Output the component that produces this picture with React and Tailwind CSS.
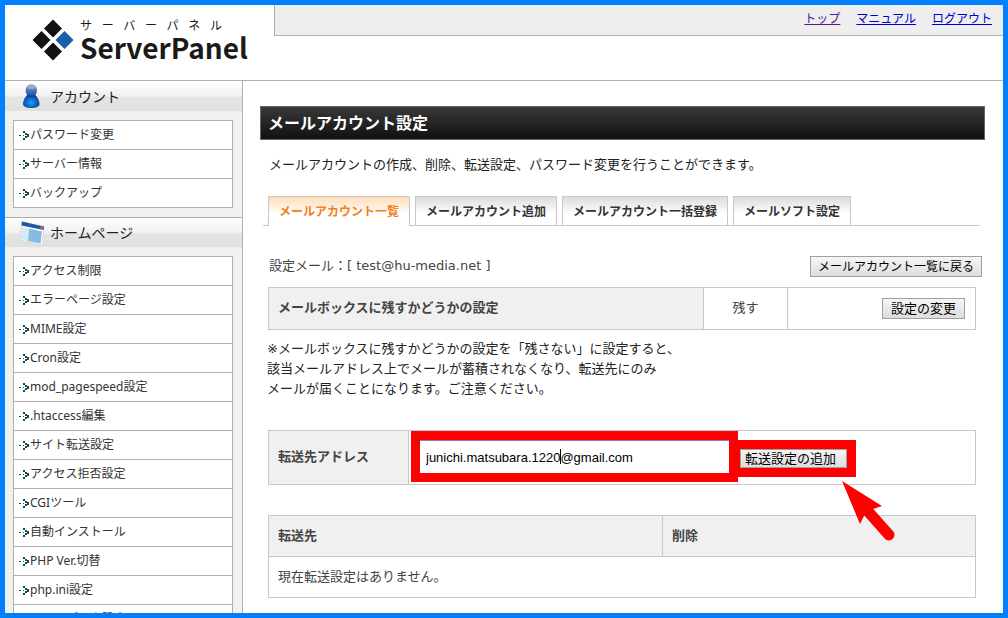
import { useState } from "react";

const accountMenu = ["パスワード変更", "サーバー情報", "バックアップ"];

const homepageMenu = [
  "アクセス制限",
  "エラーページ設定",
  "MIME設定",
  "Cron設定",
  "mod_pagespeed設定",
  ".htaccess編集",
  "サイト転送設定",
  "アクセス拒否設定",
  "CGIツール",
  "自動インストール",
  "PHP Ver.切替",
  "php.ini設定",
  "サイトデータ設定",
];

const tabs = [
  "メールアカウント一覧",
  "メールアカウント追加",
  "メールアカウント一括登録",
  "メールソフト設定",
];

function LogoMark() {
  return (
    <svg width="42" height="42" viewBox="0 0 42 42" aria-hidden="true">
      <path d="M21 0.500l9 9-9 9-9-9z" fill="#111" />
      <path d="M9.500 12l9 9-9 9-9-9z" fill="#111" />
      <path d="M32.500 12l9 9-9 9-9-9z" fill="#1c5fa8" />
      <path d="M21 23.500l9 9-9 9-9-9z" fill="#111" />
    </svg>
  );
}

function UserIcon() {
  return (
    <svg width="28" height="26" viewBox="0 0 28 26" aria-hidden="true">
      <defs>
        <linearGradient id="head" x1="0" y1="0" x2="0" y2="1">
          <stop offset="0" stopColor="#8aa0cc" />
          <stop offset="0.4" stopColor="#5a7fc0" />
          <stop offset="1" stopColor="#0d3f9c" />
        </linearGradient>
        <radialGradient id="body" cx="0.5" cy="0.6" r="0.6">
          <stop offset="0" stopColor="#1fa0f0" />
          <stop offset="0.6" stopColor="#0c62c0" />
          <stop offset="1" stopColor="#0a3480" />
        </radialGradient>
      </defs>
      <path
        d="M10.500 11.500c-2.500 3-4.500 6-4.500 9.500 0 2.500 3.500 4 8.300 4s8.200-1.500 8.200-4c0-3.500-2-6.500-4.500-9.500z"
        fill="url(#body)"
      />
      <ellipse cx="14.300" cy="7.500" rx="5.700" ry="6.300" fill="url(#head)" />
      <ellipse cx="14.300" cy="4" rx="4" ry="2" fill="#a9b5d4" opacity="0.7" />
    </svg>
  );
}

function WindowIcon() {
  return (
    <svg width="28" height="26" viewBox="0 0 28 26" aria-hidden="true">
      <path d="M5 2l22 5-2 18-22-5z" fill="#fff" stroke="#d3dce4" strokeWidth="1" />
      <path d="M4.500 7l7.500 1.500-1 12.500-7.500-2z" fill="#d5e9f6" />
      <path d="M12 8.500l13 3-1.500 12-12.500-2.500z" fill="#86bce2" />
      <path d="M5 1.500l22 5-0.500 3.500-22-4.500z" fill="#1d5ba5" />
      <path d="M23.500 6l3 0.700-0.400 2.500-3-0.600z" fill="#e0533a" />
    </svg>
  );
}

function BulletIcon() {
  return (
    <svg
      width="11"
      height="9"
      viewBox="0 0 11 9"
      fill="#174a50"
      shapeRendering="crispEdges"
      aria-hidden="true"
    >
      <path d="M0 4h2v1H0zM4 0h2v2H4zM6 2h2v2H6zM8 3h2v3H8zM6 5h2v2H6zM4 7h2v2H4zM4 4h1v1H4z" />
    </svg>
  );
}

function MenuSection({ title, icon, items, first }) {
  return (
    <section className="pb-[9px]">
      <h2
        className={
          "flex h-[30px] items-center gap-[5px] bg-[linear-gradient(#fff,#f0f0f0_50%,#e4e4e4_55%,#e0e0e0)] pl-[12px] text-[14px] text-[#222] " +
          (first ? "" : "border-t border-[#b0b0b0]")
        }
      >
        {icon}
        {title}
      </h2>
      <ul className="mt-[9px] mr-[9px] ml-2 border border-b-0 border-[#b0b0b0] bg-white">
        {items.map((item) => (
          <li key={item} className="h-[29px] border-b border-[#b0b0b0]">
            <a
              href="#"
              className="flex h-full items-center pl-[5px] text-[12px] text-[#333]"
            >
              <BulletIcon />
              {item}
            </a>
          </li>
        ))}
      </ul>
    </section>
  );
}

function GrayButton({ children, className = "" }) {
  return (
    <button
      type="button"
      className={
        "border border-[#a0a0a0] bg-linear-to-b from-[#f6f6f6] to-[#dddddd] whitespace-nowrap text-black " +
        className
      }
    >
      {children}
    </button>
  );
}

function Header() {
  return (
    <header className="flex h-[76px] items-start justify-between border-b border-[#b0b0b0]">
      <a href="#" className="flex items-center pt-[14px] pl-[27px] text-[#1a1a1a]">
        <LogoMark />
        <span className="ml-[6px] flex w-[165px] flex-col">
          <span className="w-[142px] text-[12px] leading-[14px] [text-align-last:justify]">
            サーバーパネル
          </span>
          <span className="text-[28px] leading-[28px] font-bold font-['Noto_Sans_CJK_JP',sans-serif]">
            ServerPanel
          </span>
        </span>
      </a>
      <nav className="ml-[29px] flex h-[31px] flex-1 items-center justify-end gap-4 border-b border-l border-[#b0b0b0] bg-[#eee] pr-[11px] pb-[3px] text-[12px]">
        <a href="#" className="text-[#551a8b] underline">
          トップ
        </a>
        <a href="#" className="text-[#0000cc] underline">
          マニュアル
        </a>
        <a href="#" className="text-[#0000cc] underline">
          ログアウト
        </a>
      </nav>
    </header>
  );
}

function Tabs() {
  return (
    <nav className="mr-[5px] ml-[3px] flex gap-[5px] border-b border-[#c8c8c8] pl-[5px]">
      {tabs.map((tab, i) => (
        <a
          key={tab}
          href="#"
          className={
            i === 0
              ? "-mb-px h-[30px] border border-b-0 border-[#c8c8c8] bg-linear-to-b from-[#ffdcb8] to-white to-60% px-[10px] text-[12px] leading-[30px] font-bold whitespace-nowrap text-[#f08020]"
              : "h-[29px] border border-b-0 border-[#c8c8c8] bg-linear-to-b from-[#dcdcdc] to-white to-60% px-[10px] text-[12px] leading-[30px] font-bold whitespace-nowrap text-[#333]"
          }
        >
          {tab}
        </a>
      ))}
    </nav>
  );
}

export default function App() {
  const [address, setAddress] = useState("junichi.matsubara.1220@gmail.com");

  return (
    <div className="flex h-screen flex-col overflow-hidden border-5 border-[#0080ff] bg-white font-['DejaVu_Sans','Noto_Sans_CJK_JP',sans-serif]">
      <Header />
      <div className="flex min-h-0 flex-1">
        <aside className="w-[238px] shrink-0 overflow-hidden border-r border-[#b0b0b0] bg-[#f1f1f1] font-['Noto_Sans','Noto_Sans_CJK_JP',sans-serif]">
          <MenuSection title="アカウント" icon={<UserIcon />} items={accountMenu} first />
          <MenuSection title="ホームページ" icon={<WindowIcon />} items={homepageMenu} />
        </aside>

        <main className="min-w-0 flex-1 pt-[25px] pr-[18px] pl-[17px] text-[13px] text-[#444]">
          <h1 className="h-[34px] border border-[#666] bg-linear-to-b from-[#3a3a3a] to-[#111] pl-[7px] text-[16px] leading-[34px] font-bold text-white">
            メールアカウント設定
          </h1>
          <p className="mt-[15px] mb-[21px] pl-[9px] leading-[20px] text-[#222]">
            メールアカウントの作成、削除、転送設定、パスワード変更を行うことができます。
          </p>

          <Tabs />

          <div className="mt-[30px] mr-[3px] ml-[9px] flex items-start justify-between">
            <p className="leading-[19px]">設定メール：[ test@hu-media.net ]</p>
            <GrayButton className="h-[21px] px-[7px] text-[12px] leading-[18px]">
              メールアカウント一覧に戻る
            </GrayButton>
          </div>

          <div className="mr-[9px] ml-[8px]">
            <table className="mt-[10px] w-full table-fixed border-collapse">
              <tbody>
                <tr className="h-[42px]">
                  <th
                    scope="row"
                    className="border border-[#c8c8c8] bg-[#f0f0f0] px-[9px] pb-[2px] text-left"
                  >
                    メールボックスに残すかどうかの設定
                  </th>
                  <td className="w-[84px] border border-[#c8c8c8] pb-[2px] text-center">残す</td>
                  <td className="w-[188px] border border-[#c8c8c8] pr-[10px] text-right">
                    <GrayButton className="h-[21px] px-[8px] text-[13px] leading-[18px]">
                      設定の変更
                    </GrayButton>
                  </td>
                </tr>
              </tbody>
            </table>

            <p className="mt-[9px] -ml-px leading-[20px] text-[#222]">
              ※メールボックスに残すかどうかの設定を「残さない」に設定すると、
              <br />
              該当メールアドレス上でメールが蓄積されなくなり、転送先にのみ
              <br />
              メールが届くことになります。ご注意ください。
            </p>

            <table className="mt-[31px] w-full table-fixed border-collapse">
              <tbody>
                <tr className="h-[54px]">
                  <th
                    scope="row"
                    className="w-[140px] border border-[#c8c8c8] bg-[#f0f0f0] px-[9px] pb-[2px] text-left"
                  >
                    <label htmlFor="address">転送先アドレス</label>
                  </th>
                  <td className="border border-[#c8c8c8] pb-[2px]">
                    <div className="flex items-end pl-[2px]">
                      <div className="relative w-[327px] border-9 border-[#ff0000]">
                        <input
                          id="address"
                          type="text"
                          value={address}
                          onChange={(e) => setAddress(e.target.value)}
                          className="block h-[33px] w-full border-t border-[#8080d0] bg-white pl-[6px] font-['Liberation_Sans',sans-serif] text-[13px] text-black outline-none"
                        />
                        <span className="absolute top-[9px] left-[140px] h-[15px] w-px bg-black" />
                      </div>
                      <div className="relative mb-[5px] -ml-[7px] w-[125px] border-9 border-[#ff0000]">
                        <GrayButton className="block h-[19px] w-full px-[4px] text-left text-[13px] leading-[16px]">
                          転送設定の追加
                        </GrayButton>
                        {/* pointer arrow */}
                        <svg
                          width="54"
                          height="62"
                          viewBox="0 0 54 62"
                          className="absolute top-[32px] left-[102px]"
                          aria-hidden="true"
                        >
                          <path d="M0 0L40 25 31 28 22 35 18 43z" fill="#f00" />
                          <path
                            d="M24 28L47 54"
                            stroke="#f00"
                            strokeWidth="11"
                            strokeLinecap="round"
                          />
                        </svg>
                      </div>
                    </div>
                  </td>
                </tr>
              </tbody>
            </table>

            <table className="mt-[30px] w-full table-fixed border-collapse">
              <thead>
                <tr className="h-[41px] bg-[#f0f0f0] text-left">
                  <th scope="col" className="w-[394px] border border-[#c8c8c8] px-[9px]">
                    転送先
                  </th>
                  <th scope="col" className="border border-[#c8c8c8] px-[9px]">
                    削除
                  </th>
                </tr>
              </thead>
              <tbody>
                <tr className="h-[41px]">
                  <td colSpan={2} className="border border-[#c8c8c8] px-[9px]">
                    現在転送設定はありません。
                  </td>
                </tr>
              </tbody>
            </table>
          </div>
        </main>
      </div>
    </div>
  );
}
